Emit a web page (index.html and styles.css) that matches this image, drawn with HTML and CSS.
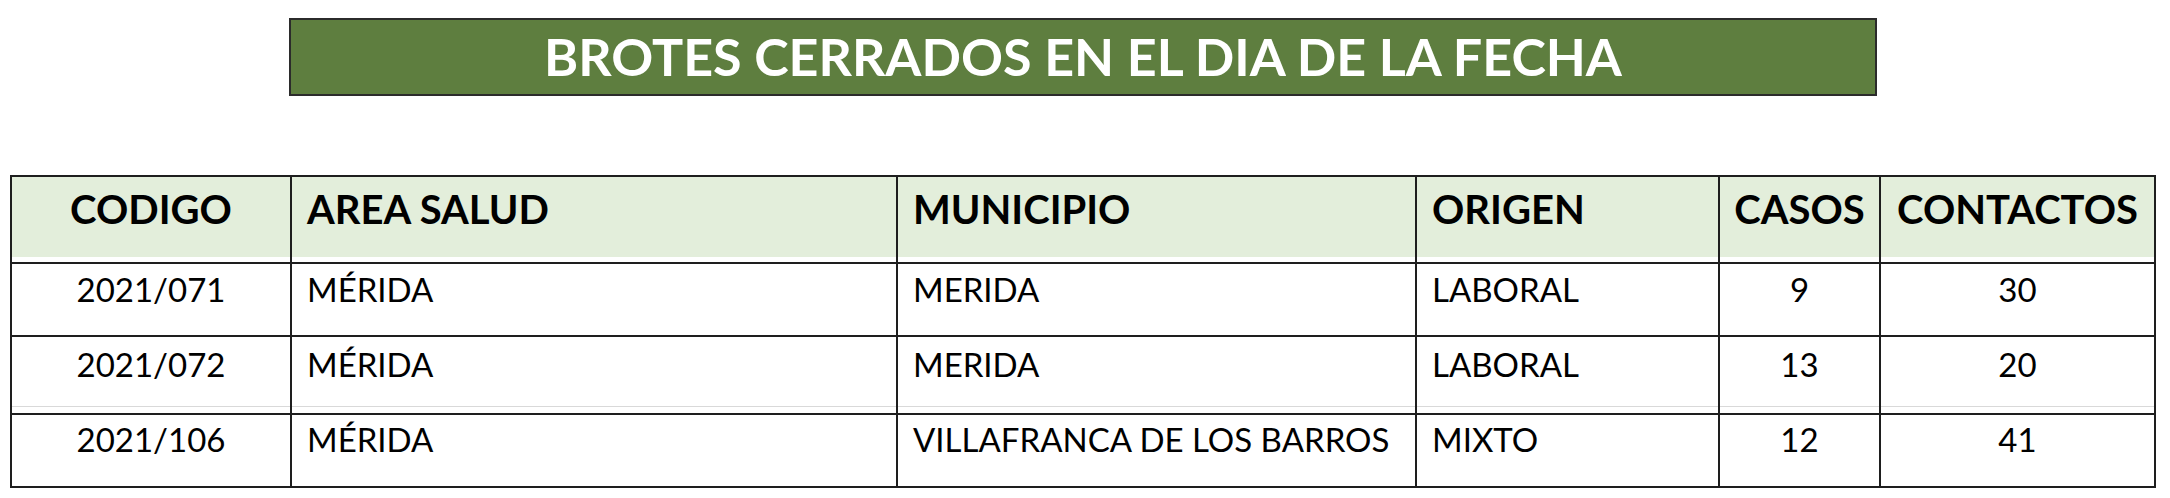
FILE: index.html
```html
<!DOCTYPE html>
<html lang="es">
<head>
<meta charset="utf-8">
<title>Brotes cerrados en el día de la fecha</title>
<link rel="stylesheet" href="styles.css">
</head>
<body>
<main class="page">
  <h1 class="title-bar">BROTES CERRADOS EN EL DIA DE LA FECHA</h1>
  <table class="brotes">
    <colgroup>
      <col class="c-codigo">
      <col class="c-area">
      <col class="c-muni">
      <col class="c-origen">
      <col class="c-casos">
      <col class="c-contactos">
    </colgroup>
    <thead>
      <tr>
        <th class="center">CODIGO</th>
        <th>AREA SALUD</th>
        <th>MUNICIPIO</th>
        <th>ORIGEN</th>
        <th class="center">CASOS</th>
        <th class="center">CONTACTOS</th>
      </tr>
    </thead>
    <tbody>
      <tr class="r1">
        <td class="center">2021/071</td>
        <td>MÉRIDA</td>
        <td>MERIDA</td>
        <td>LABORAL</td>
        <td class="center">9</td>
        <td class="center">30</td>
      </tr>
      <tr class="r2">
        <td class="center">2021/072</td>
        <td>MÉRIDA</td>
        <td>MERIDA</td>
        <td>LABORAL</td>
        <td class="center">13</td>
        <td class="center">20</td>
      </tr>
      <tr class="r3">
        <td class="center">2021/106</td>
        <td>MÉRIDA</td>
        <td>VILLAFRANCA DE LOS BARROS</td>
        <td>MIXTO</td>
        <td class="center">12</td>
        <td class="center">41</td>
      </tr>
    </tbody>
  </table>
</main>
</body>
</html>
```
FILE: styles.css
```css
html, body {
  margin: 0;
  padding: 0;
  background: #ffffff;
}

body {
  font-family: Lato, "Open Sans", "Liberation Sans", sans-serif;
  color: #000;
}

.page {
  width: 2144px;
  padding: 18px 0 0 11px;
  display: flex;
  flex-direction: column;
  align-items: center;
  gap: 79px;
}

.title-bar {
  box-sizing: border-box;
  width: 1588px;
  height: 78px;
  margin: 0;
  border: 2px solid #2b2b2b;
  background: #5e7e3f;
  color: #ffffff;
  font-size: 52px;
  font-weight: 700;
  line-height: 72px;
  text-align: center;
  letter-spacing: 0;
}

.brotes {
  width: 2144px;
  border-collapse: collapse;
  table-layout: fixed;
  border: 2px solid #1e1e1e;
}

.c-codigo { width: 280px; }
.c-area { width: 606px; }
.c-muni { width: 519px; }
.c-origen { width: 303px; }
.c-casos { width: 161px; }
.c-contactos { width: 275px; }

.brotes th,
.brotes td {
  border: 2px solid #1e1e1e;
  text-align: left;
  vertical-align: top;
  white-space: nowrap;
  padding: 0 0 0 15px;
}

.brotes th {
  height: 87px;
  box-sizing: border-box;
  padding-top: 8px;
  background: #e3eedb;
  box-shadow: inset 0 -5px 0 #ffffff;
  font-size: 40px;
  font-weight: 700;
  line-height: 48px;
}

.brotes td {
  font-size: 33px;
  font-weight: 400;
  line-height: 40px;
  box-sizing: border-box;
  padding-top: 5px;
}

.brotes .r1 td { height: 73px; }
.brotes .r2 td {
  height: 78px;
  padding-top: 7px;
  box-shadow: inset 0 -6px 0 #ffffff, inset 0 -7px 0 #d9d9d9;
}
.brotes .r3 td { height: 73px; padding-top: 4px; }

.brotes .center {
  text-align: center;
  padding-left: 0;
}
```
